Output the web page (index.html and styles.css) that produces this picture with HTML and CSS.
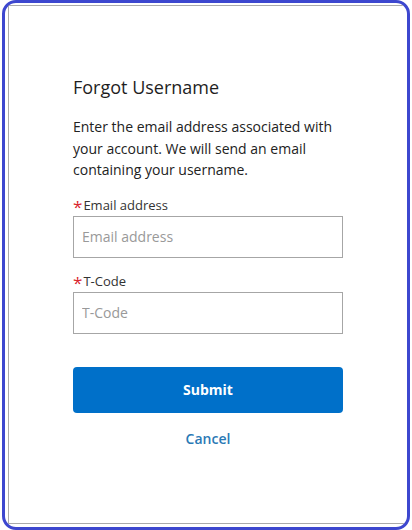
FILE: index.html
```html
<!DOCTYPE html>
<html>
<head>
<meta charset="utf-8">
<link rel="stylesheet" href="styles.css">
</head>
<body>
<div class="frame">
  <div class="card">
    <div class="content">
      <h1 class="title">Forgot Username</h1>
      <p class="intro">Enter the email address associated with your account. We will send an email containing your username.</p>
      <div class="field">
        <label class="label"><span class="req">*</span>Email address</label>
        <input class="input" type="text" placeholder="Email address">
      </div>
      <div class="field">
        <label class="label"><span class="req">*</span>T-Code</label>
        <input class="input" type="text" placeholder="T-Code">
      </div>
      <button class="submit" type="button">Submit</button>
      <a class="cancel" href="#">Cancel</a>
    </div>
  </div>
</div>
</body>
</html>
```
FILE: styles.css
```css
html, body {
  margin: 0;
  padding: 0;
  background: #ffffff;
}
body {
  font-family: "Open Sans", "Noto Sans", sans-serif;
  color: #222222;
}
.frame {
  box-sizing: border-box;
  width: 408px;
  height: 530px;
  margin-left: 2px;
  border: 3px solid #3d47cf;
  border-radius: 14px;
  overflow: hidden;
  display: flex;
  flex-direction: column;
}
.card {
  flex: 1;
  margin: 2px 0 3px 3px;
  border: 1px solid #aaaaaa;
  border-right: none;
}
.content {
  width: 270px;
  margin-left: 64px;
  padding-top: 68px;
  display: flex;
  flex-direction: column;
}
.title {
  margin: 0;
  font-size: 18px;
  font-weight: 400;
  line-height: 26px;
  color: #1e1e1e;
}
.intro {
  margin: 16px 0 0;
  font-size: 14px;
  line-height: 21.5px;
  color: #222222;
}
.field {
  display: flex;
  flex-direction: column;
}
.field + .field {
  margin-top: 14px;
}
.intro + .field {
  margin-top: 15px;
}
.label {
  font-size: 13px;
  line-height: 18px;
  color: #333333;
  display: flex;
  align-items: baseline;
}
.req {
  color: #d9262e;
  font-size: 17px;
  line-height: 14px;
  margin-right: 1px;
  position: relative;
  top: 3px;
}
.input {
  box-sizing: border-box;
  height: 42px;
  margin-top: 2px;
  border: 1px solid #a6a6a6;
  border-radius: 0;
  padding: 0 8px;
  font-family: "Open Sans", "Noto Sans", sans-serif;
  font-size: 14px;
  color: #333333;
  outline: none;
}
.input::placeholder {
  color: #999999;
}
.submit {
  margin-top: 33px;
  height: 46px;
  border: none;
  border-radius: 4px;
  background: #0070c9;
  color: #ffffff;
  font-family: "Open Sans", "Noto Sans", sans-serif;
  font-size: 14px;
  font-weight: 700;
}
.cancel {
  margin-top: 16px;
  align-self: center;
  font-size: 14px;
  font-weight: 600;
  line-height: 20px;
  color: #2a79b5;
  text-decoration: none;
}
```
